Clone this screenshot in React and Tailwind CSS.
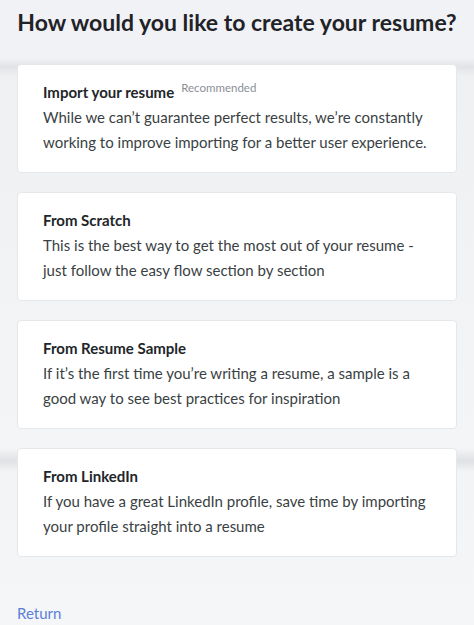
import React from 'react';

const options = [
  {
    title: 'Import your resume',
    badge: 'Recommended',
    text: 'While we can’t guarantee perfect results, we’re constantly working to improve importing for a better user experience.',
  },
  {
    title: 'From Scratch',
    text: 'This is the best way to get the most out of your resume - just follow the easy flow section by section',
  },
  {
    title: 'From Resume Sample',
    text: 'If it’s the first time you’re writing a resume, a sample is a good way to see best practices for inspiration',
  },
  {
    title: 'From LinkedIn',
    text: 'If you have a great LinkedIn profile, save time by importing your profile straight into a resume',
  },
];

const App = () => {
  return (
    <div className="min-h-[625px] bg-[linear-gradient(to_bottom,#f1f2f5_0px,#f1f2f5_58px,#e2e3e6_67px,#eff0f2_76px,#f4f5f7_448px,#e0e1e4_461px,#f3f4f6_472px,#f5f6f7_100%)] px-[17px] font-['Lato','Noto_Sans',sans-serif] text-[#2b2f33]">
      <h1 className="pt-[7px] text-center text-[23px] font-bold leading-[30px] text-[#1f2328]">
        How would you like to create your resume?
      </h1>

      <div className="mt-[27px] flex flex-col gap-[19px]">
        {options.map((opt) => (
          <div
            key={opt.title}
            className="rounded-[4px] border border-[#e6e7ea] bg-white pb-[17px] pl-[25px] pr-[20px] pt-[15px]"
          >
            <div className="flex items-start text-[15px] leading-[25px]">
              <span className="font-bold text-[#22262a]">{opt.title}</span>
              {opt.badge && (
                <span className="ml-[7px] mt-[-2px] text-[11.5px] leading-[20px] text-[#8a8f96]">{opt.badge}</span>
              )}
            </div>
            <p className="text-[15px] leading-[25px] text-[#3a3f44]">{opt.text}</p>
          </div>
        ))}
      </div>

      <div className="mt-[44px] pb-[10px]">
        <a href="#" className="text-[15px] leading-[25px] text-[#5b7fd8]">
          Return
        </a>
      </div>
    </div>
  );
};

export default App;
